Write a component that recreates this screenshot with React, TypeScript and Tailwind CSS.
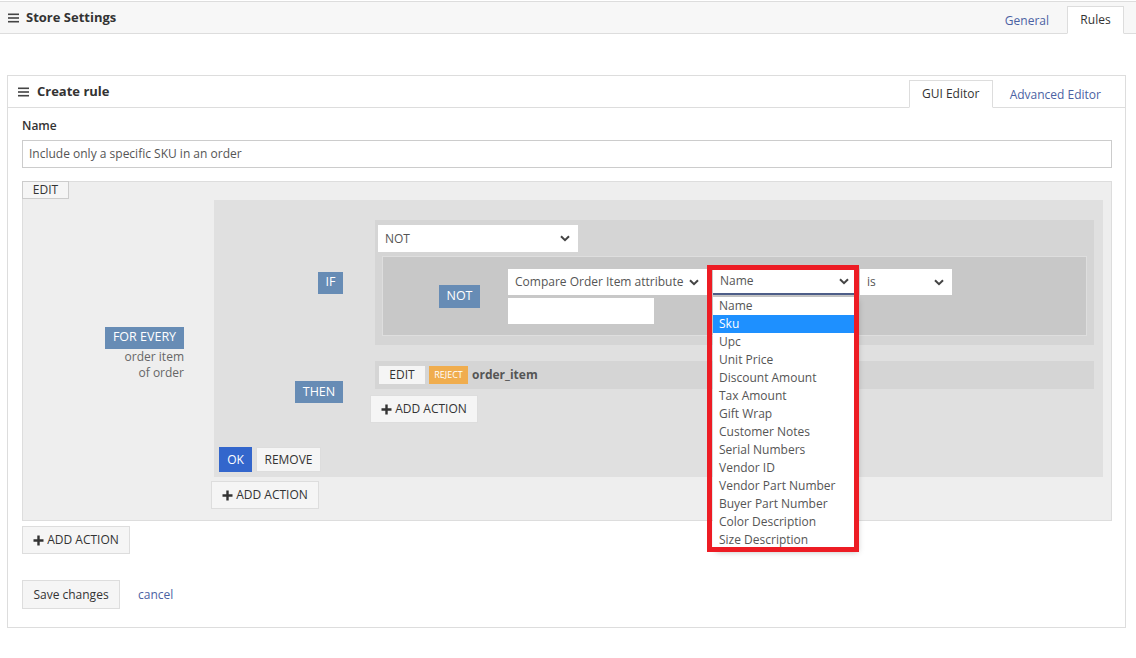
import React from "react";

const Hamb = () => (
  <svg width="11" height="10" viewBox="0 0 11 10" className="shrink-0">
    <rect x="0" y="0.5" width="11" height="1.6" fill="#444" />
    <rect x="0" y="4.2" width="11" height="1.6" fill="#444" />
    <rect x="0" y="7.9" width="11" height="1.6" fill="#444" />
  </svg>
);

const Chevron = () => (
  <svg width="10" height="7" viewBox="0 0 10 7" className="shrink-0">
    <path d="M1 1.2 L5 5.2 L9 1.2" fill="none" stroke="#444" strokeWidth="2" />
  </svg>
);

const Plus = () => (
  <svg width="11" height="11" viewBox="0 0 11 11" className="shrink-0">
    <path d="M5.5 0.5 V10.5 M0.5 5.5 H10.5" fill="none" stroke="#333" strokeWidth="2.4" />
  </svg>
);

const Badge = ({ children, cls }: { children: React.ReactNode; cls: string }) => (
  <div className={"bg-[#678cb5] text-white flex items-center justify-center text-[12.5px] " + cls}>{children}</div>
);

const Sel = ({ text, cls }: { text: string; cls: string }) => (
  <div className={"h-[26px] bg-white flex items-center justify-between pl-[7px] pr-[8px] text-[#555] " + cls}>
    <span>{text}</span>
    <Chevron />
  </div>
);

const AddAction = ({ cls }: { cls: string }) => (
  <div className={"w-[108px] h-[28px] border border-[#ddd] bg-[#f5f5f5] flex items-center justify-center gap-[3px] text-[#333] " + cls}>
    <Plus />
    <span>ADD ACTION</span>
  </div>
);

const options = [
  "Name",
  "Sku",
  "Upc",
  "Unit Price",
  "Discount Amount",
  "Tax Amount",
  "Gift Wrap",
  "Customer Notes",
  "Serial Numbers",
  "Vendor ID",
  "Vendor Part Number",
  "Buyer Part Number",
  "Color Description",
  "Size Description",
];

export default function App() {
  return (
    <div className="w-[1136px] h-[658px] bg-white overflow-hidden text-[12px] text-[#333] font-['Open_Sans','Noto_Sans',sans-serif]">
      {/* Top header */}
      <div className="mt-px h-[33px] border-y border-[#ddd] bg-[#f7f7f7] flex items-end justify-between">
        <div className="self-center flex items-center gap-[7px] pl-[8px] font-bold text-[13px] text-[#333]">
          <Hamb />
          <span>Store Settings</span>
        </div>
        <div className="flex items-end mr-[12px] -mb-px">
          <div className="h-[27px] px-[18px] flex items-center text-[#4b62a3]">General</div>
          <div className="h-[28px] w-[57px] flex items-center justify-center bg-white border border-[#ddd] border-b-white">Rules</div>
        </div>
      </div>

      {/* Create rule panel */}
      <div className="ml-[7px] mt-[41px] w-[1119px] border border-[#ddd]">
        <div className="h-[32px] border-b border-[#ddd] flex items-end justify-between">
          <div className="self-center flex items-center gap-[8px] pl-[10px] font-bold text-[13px]">
            <Hamb />
            <span>Create rule</span>
          </div>
          <div className="flex items-end -mb-px mr-[7px]">
            <div className="h-[28px] w-[84px] flex items-center justify-center bg-white border border-[#ddd] border-b-white">GUI Editor</div>
            <div className="h-[27px] px-[17px] flex items-center text-[#4b62a3]">Advanced Editor</div>
          </div>
        </div>

        <div className="pl-[14px] pr-[13px] pt-[9px] pb-[18px]">
          <div className="font-semibold leading-[18px] mb-[5px]">Name</div>
          <div className="h-[28px] border border-[#ccc] flex items-center px-[6px] text-[#555]">
            Include only a specific SKU in an order
          </div>

          {/* Rule area */}
          <div className="mt-[13px] border border-[#ddd] bg-[#eee] pb-[11px]">
            <div className="w-[47px] h-[18px] -mt-px -ml-px border border-[#ccc] bg-[#f5f5f5] flex items-center justify-center">EDIT</div>
            <div className="flex mt-[1px]">
              <div className="w-[191px] flex flex-col items-end justify-center pr-[30px] pb-[2px]">
                <Badge cls="w-[79px] h-[22px]">FOR EVERY</Badge>
                <div className="text-right text-[#666] leading-[16px]">order item</div>
                <div className="text-right text-[#666] leading-[16px]">of order</div>
              </div>
              <div className="flex flex-col items-start">
                {/* Inner region */}
                <div className="w-[889px] bg-[#e0e0e0] pt-[20px] pb-[5px]">
                  {/* IF row */}
                  <div className="flex items-center">
                    <div className="w-[161px] flex justify-end pr-[32px]">
                      <Badge cls="w-[25px] h-[22px]">IF</Badge>
                    </div>
                    <div className="w-[719px] bg-[#d5d5d5] pt-[5px] pl-[3px]">
                      <Sel text="NOT" cls="w-[200px] h-[27px]" />
                      <div className="mt-[4px] ml-[4px] mr-[7px] mb-[9px] border border-[#dedede] bg-[#c8c8c8] flex">
                        <div className="w-[125px] flex items-center justify-end pr-[28px]">
                          <Badge cls="w-[41px] h-[23px]">NOT</Badge>
                        </div>
                        <div className="pt-[12px] pb-[11px]">
                          <div className="flex items-center">
                            <Sel text="Compare Order Item attribute" cls="w-[199px]" />
                            <div className="relative ml-[6px]">
                              <div className="w-[142px] h-[26px] bg-white flex items-center justify-between pl-[7px] pr-[6px] text-[#555] border-b-2 border-[#4f5f8a]">
                                <span>Name</span>
                                <Chevron />
                              </div>
                              <div className="absolute left-0 top-[28px] w-[142px] bg-white z-10 shadow-[3px_3px_6px_rgba(0,0,0,0.25)]">
                                {options.map((o) => (
                                  <div
                                    key={o}
                                    className={o === "Sku" ? "h-[18px] leading-[18px] pl-[6px] bg-[#1e90ff] text-white" : "h-[18px] leading-[18px] pl-[6px] text-[#555]"}
                                  >
                                    {o}
                                  </div>
                                ))}
                              </div>
                              <div className="absolute left-[-6px] top-[-4px] w-[152px] h-[287px] border-[5px] border-[#ed1c24] z-20 pointer-events-none" />
                            </div>
                            <Sel text="is" cls="w-[92px] ml-[5px]" />
                          </div>
                          <div className="mt-[3px] w-[146px] h-[26px] bg-white" />
                        </div>
                      </div>
                    </div>
                  </div>

                  {/* THEN row */}
                  <div className="flex items-center mt-[16px]">
                    <div className="w-[161px] flex justify-end pr-[32px]">
                      <Badge cls="w-[48px] h-[22px]">THEN</Badge>
                    </div>
                    <div className="flex flex-col items-start">
                      <div className="w-[719px] h-[28px] bg-[#d5d5d5] flex items-center pl-[4px] gap-[4px]">
                        <div className="w-[46px] h-[18px] bg-[#f5f5f5] flex items-center justify-center">EDIT</div>
                        <div className="w-[39px] h-[18px] bg-[#f0ad4e] text-white text-[9px] flex items-center justify-center">REJECT</div>
                        <span className="font-bold text-[#555]">order_item</span>
                      </div>
                      <AddAction cls="mt-[6px] -ml-[5px]" />
                    </div>
                  </div>

                  {/* OK / REMOVE */}
                  <div className="flex items-center mt-[24px] pl-[5px] gap-[4px]">
                    <div className="w-[33px] h-[25px] bg-[#3366cc] text-white flex items-center justify-center">OK</div>
                    <div className="w-[65px] h-[25px] bg-[#f5f5f5] border border-[#ddd] flex items-center justify-center">REMOVE</div>
                  </div>
                </div>
                <AddAction cls="mt-[4px] -ml-[3px]" />
              </div>
            </div>
          </div>

          <AddAction cls="mt-[5px]" />

          <div className="flex items-center mt-[26px]">
            <div className="w-[98px] h-[29px] border border-[#ddd] bg-[#f5f5f5] flex items-center justify-center">Save changes</div>
            <span className="ml-[18px] text-[#4b62a3]">cancel</span>
          </div>
        </div>
      </div>
    </div>
  );
}
